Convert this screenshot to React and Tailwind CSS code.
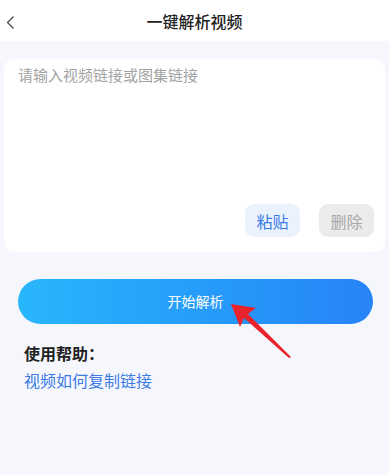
export default function App() {
  return (
    <div
      className="relative w-[389px] h-[475px] bg-[#f6f7fc] overflow-hidden"
      style={{ fontFamily: '"Noto Sans CJK SC", "Noto Sans", sans-serif' }}
    >
      {/* header */}
      <div className="relative h-[41px] bg-white flex items-center justify-center">
        <svg className="absolute left-0 top-0" width="20" height="41" viewBox="0 0 20 41">
          <polyline points="13.5,16.5 7.5,22.5 13.5,28.5" fill="none" stroke="#444" strokeWidth="1.2" />
        </svg>
        <h1 className="text-[16px] font-medium text-[#222] leading-none">一键解析视频</h1>
      </div>

      {/* input card */}
      <div className="mx-[4px] mt-[18px] h-[193px] bg-white rounded-[10px] flex flex-col px-[14px] pt-[5px] pb-[15px]">
        <textarea
          className="flex-1 resize-none outline-none text-[15px] text-[#333] placeholder:text-[#a3a3a3] bg-transparent"
          placeholder="请输入视频链接或图集链接"
        />
        <div className="flex justify-end gap-[19px]">
          <button className="w-[55px] h-[33px] rounded-[9px] bg-[#eaf2fe] text-[#3b7be6] text-[16px]">
            粘贴
          </button>
          <button className="w-[55px] h-[33px] rounded-[9px] bg-[#ebebeb] text-[#a8a8a8] text-[16px] mr-[-3px]">
            删除
          </button>
        </div>
      </div>

      {/* start button */}
      <div className="px-[18px] mt-[27px]">
        <button className="w-[355px] h-[45px] rounded-full bg-gradient-to-r from-[#29b6fb] to-[#2783f7] text-white text-[14px]">
          开始解析
        </button>
      </div>

      {/* help */}
      <div className="px-[24px] mt-[19px]">
        <p className="text-[16px] font-bold text-[#222] leading-[20px]">使用帮助：</p>
        <p className="mt-[7px] text-[16px] text-[#3b7be6] leading-[20px]">视频如何复制链接</p>
      </div>

      {/* red arrow annotation */}
      <svg className="absolute left-0 top-0" width="389" height="475" viewBox="0 0 389 475">
        <polygon points="231,304 256,308 248,314 291,357 289,358 244,318 240,327" fill="#e8232b" />
      </svg>
    </div>
  );
}
